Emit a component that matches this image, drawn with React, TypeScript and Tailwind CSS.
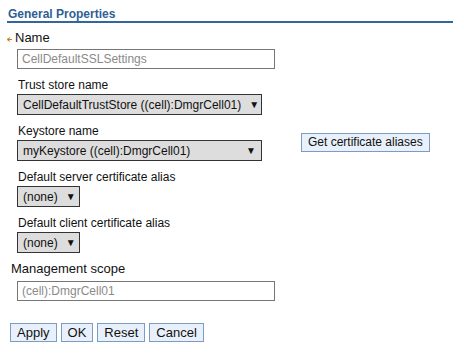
import React from 'react';

function FakeSelect({ value, width }: { value: string; width: string }) {
  return <div className={`flex items-center justify-between h-[21px] ${width} border border-[#333] bg-[#dddddd] pl-[5px] pr-[5px] text-[#111]`}>
      <span className="whitespace-nowrap">{value}</span>
      <span className="text-[10px] leading-none ml-[8px]">▼</span>
    </div>;
}

function Field({ label, children }: { label: string; children: React.ReactNode }) {
  return <div className="mb-[9px]">
      <div className="leading-[14px] pl-[1px] text-[#111]">{label}</div>
      <div className="mt-[2px]">{children}</div>
    </div>;
}

function Btn({ children, small }: { children: React.ReactNode; small?: boolean }) {
  return <button type="button" className={`h-[19px] px-[6px] border border-[#7d9cc4] bg-[#e8f0fb] leading-[17px] text-[#111] ${small ? 'text-[12px]' : 'text-[13px]'}`}>
      {children}
    </button>;
}

export default function App() {
  return <div className="w-[464px] h-[353px] bg-white font-['Liberation_Sans',Arial,sans-serif] text-[12px] text-[#111]">
      <div className="ml-[7px] w-[446px] pt-[7px]">
        <h2 className="pl-[1px] leading-[14px] font-bold text-[#2f5f95] border-b-2 border-[#336699]">
          General Properties
        </h2>
      </div>
      <div className="pl-[7px] pt-[8px]">
        <div className="flex items-center leading-[14px]">
          <svg width="5" height="5" viewBox="0 0 5 5" className="mt-[3px]">
            <path d="M0 2.5 L3 0.5 M0 2.5 L3 4.5 M1 2.5 H5" stroke="#b58a1a" strokeWidth="1" fill="none" />
          </svg>
          <span className="ml-[3px] text-[13px]">Name</span>
        </div>
        <div className="pl-[10px] mt-[4px]">
          <input readOnly value="CellDefaultSSLSettings" className="block w-[258px] h-[20px] border border-[#767676] px-[4px] text-[12px] text-[#8a8a8a] outline-none" />
        </div>
      </div>
      <div className="flex pl-[17px] mt-[9px]">
        <div>
          <Field label="Trust store name">
            <FakeSelect value="CellDefaultTrustStore ((cell):DmgrCell01)" width="w-[245px]" />
          </Field>
          <Field label="Keystore name">
            <FakeSelect value="myKeystore ((cell):DmgrCell01)" width="w-[245px]" />
          </Field>
        </div>
        <div className="ml-[39px] mt-[55px]">
          <Btn small>Get certificate aliases</Btn>
        </div>
      </div>
      <div className="pl-[17px]">
        <Field label="Default server certificate alias">
          <FakeSelect value="(none)" width="w-[63px]" />
        </Field>
        <Field label="Default client certificate alias">
          <FakeSelect value="(none)" width="w-[63px]" />
        </Field>
      </div>
      <div className="pl-[11px] mt-[1px]">
        <div className="leading-[14px] text-[13px]">Management scope</div>
        <div className="pl-[6px] mt-[5px]">
          <input readOnly value="(cell):DmgrCell01" className="block w-[258px] h-[20px] border border-[#767676] px-[4px] text-[12px] text-[#8a8a8a] outline-none" />
        </div>
      </div>
      <div className="flex gap-[4px] pl-[10px] mt-[22px]">
        <Btn>Apply</Btn>
        <Btn>OK</Btn>
        <Btn>Reset</Btn>
        <Btn>Cancel</Btn>
      </div>
    </div>;
}
